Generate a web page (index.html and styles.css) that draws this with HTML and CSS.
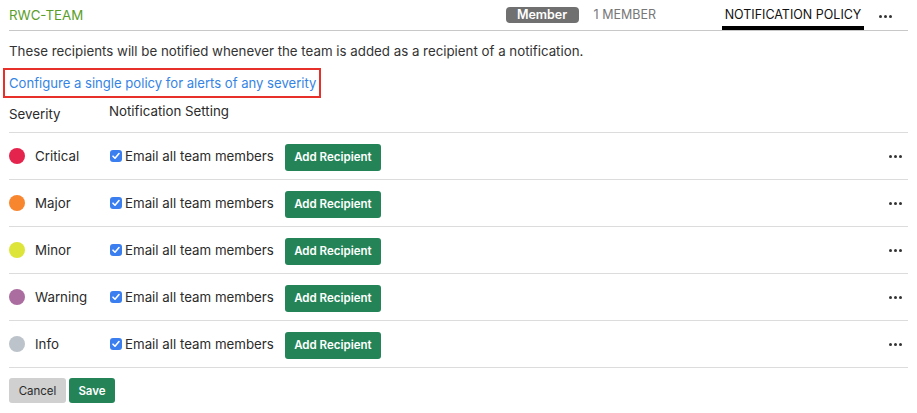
FILE: index.html
```html
<!DOCTYPE html>
<html>
<head>
<meta charset="utf-8">
<link rel="stylesheet" href="styles.css">
</head>
<body>
<div class="page">
  <div class="header">
    <div class="team">RWC-TEAM</div>
    <div class="header-right">
      <span class="badge">Member</span>
      <span class="members">1 MEMBER</span>
      <span class="tab">NOTIFICATION POLICY</span>
      <span class="more more-top"><i></i><i></i><i></i></span>
    </div>
  </div>
  <p class="desc">These recipients will be notified whenever the team is added as a recipient of a notification.</p>
  <div class="link-box"><a class="link">Configure a single policy for alerts of any severity</a></div>
  <div class="cols">
    <span class="col-sev">Severity</span>
    <span class="col-set">Notification Setting</span>
  </div>
  <div class="rows">
    <div class="row">
      <span class="dot critical"></span><span class="sev">Critical</span>
      <label class="check"><span class="box"><svg viewBox="0 0 12 12" width="12" height="12"><path d="M3 6.2l2 2 4-4.6" fill="none" stroke="#fff" stroke-width="1.6" stroke-linecap="round" stroke-linejoin="round"/></svg></span>Email all team members</label>
      <button class="btn green">Add Recipient</button>
      <span class="more"><i></i><i></i><i></i></span>
    </div>
    <div class="row">
      <span class="dot major"></span><span class="sev">Major</span>
      <label class="check"><span class="box"><svg viewBox="0 0 12 12" width="12" height="12"><path d="M3 6.2l2 2 4-4.6" fill="none" stroke="#fff" stroke-width="1.6" stroke-linecap="round" stroke-linejoin="round"/></svg></span>Email all team members</label>
      <button class="btn green">Add Recipient</button>
      <span class="more"><i></i><i></i><i></i></span>
    </div>
    <div class="row">
      <span class="dot minor"></span><span class="sev">Minor</span>
      <label class="check"><span class="box"><svg viewBox="0 0 12 12" width="12" height="12"><path d="M3 6.2l2 2 4-4.6" fill="none" stroke="#fff" stroke-width="1.6" stroke-linecap="round" stroke-linejoin="round"/></svg></span>Email all team members</label>
      <button class="btn green">Add Recipient</button>
      <span class="more"><i></i><i></i><i></i></span>
    </div>
    <div class="row">
      <span class="dot warning"></span><span class="sev">Warning</span>
      <label class="check"><span class="box"><svg viewBox="0 0 12 12" width="12" height="12"><path d="M3 6.2l2 2 4-4.6" fill="none" stroke="#fff" stroke-width="1.6" stroke-linecap="round" stroke-linejoin="round"/></svg></span>Email all team members</label>
      <button class="btn green">Add Recipient</button>
      <span class="more"><i></i><i></i><i></i></span>
    </div>
    <div class="row">
      <span class="dot info"></span><span class="sev">Info</span>
      <label class="check"><span class="box"><svg viewBox="0 0 12 12" width="12" height="12"><path d="M3 6.2l2 2 4-4.6" fill="none" stroke="#fff" stroke-width="1.6" stroke-linecap="round" stroke-linejoin="round"/></svg></span>Email all team members</label>
      <button class="btn green">Add Recipient</button>
      <span class="more"><i></i><i></i><i></i></span>
    </div>
  </div>
  <div class="actions">
    <button class="btn grey">Cancel</button>
    <button class="btn green save">Save</button>
  </div>
</div>
</body>
</html>
```
FILE: styles.css
```css
* { box-sizing: border-box; }
html, body { margin: 0; padding: 0; background: #fff; }
body {
  font-family: Inter, "Open Sans", "Liberation Sans", sans-serif;
  font-size: 13.3px;
  color: #2b2b2b;
  white-space: nowrap;
}
.page { padding: 0 9px; }
.header {
  height: 31px;
  display: flex;
  align-items: stretch;
  justify-content: space-between;
  border-bottom: 1px solid #c8c8c8;
}
.team {
  color: #5a9e2a;
  font-size: 13.3px;
  padding-top: 7px;
}
.header-right { display: flex; align-items: stretch; }
.badge {
  align-self: flex-start;
  margin-top: 7px;
  height: 16px;
  width: 73px;
  background: #707070;
  color: #fff;
  font-weight: 600;
  font-size: 12.5px;
  line-height: 16px;
  text-align: center;
  border-radius: 4px;
}
.members {
  margin-left: 15px;
  color: #777;
  font-size: 12.5px;
  padding-top: 7px;
}
.tab {
  margin-left: 66px;
  width: 142px;
  font-size: 12.5px;
  color: #111;
  padding-top: 7px;
  text-align: center;
  border-bottom: 4px solid #000;
}
.more {
  display: flex;
  gap: 2px;
  align-items: center;
  margin-left: 15px;
  width: 14px;
}
.more i {
  width: 3px; height: 3px; border-radius: 50%;
  background: #333;
  display: block;
}
.more-top { align-self: flex-start; margin-top: 15px; margin-right: 15px; }
.desc { margin: 10px 0 0; line-height: 20px; color: #333; }
.link-box {
  margin: 7px 0 0 -6px;
  width: 318px;
  height: 30px;
  border: 2px solid #e8302b;
  display: flex;
  align-items: center;
  padding-left: 4px;
}
.link { color: #3584e4; font-size: 13.1px; }
.cols {
  display: flex;
  height: 35px;
  align-items: flex-start;
  padding-top: 5px;
  border-bottom: 1px solid #dcdcdc;
}
.col-sev { width: 100px; padding-top: 3px; }
.row {
  height: 47px;
  display: flex;
  align-items: center;
  border-bottom: 1px solid #dcdcdc;
}
.dot { width: 16px; height: 16px; border-radius: 50%; margin-right: 10px; }
.critical { background: #e5244d; }
.major { background: #f7862f; }
.minor { background: #dde53a; }
.warning { background: #ab6da0; }
.info { background: #bcc3ca; }
.sev { width: 75px; }
.check { display: flex; align-items: center; color: #2b2b2b; }
.box {
  width: 12px; height: 12px; border-radius: 3px;
  background: #3b7ef0;
  display: inline-flex;
  margin-right: 3px;
}
.btn {
  font-family: inherit;
  border: none;
  border-radius: 3px;
  font-size: 11.5px;
  font-weight: 600;
  cursor: pointer;
}
.green { background: #248458; color: #fff; }
.row .btn { margin-left: 11px; width: 96px; height: 27px; padding: 0; margin-top: 2px; }
.row .more { margin-left: auto; margin-right: 5px; }
.actions { display: flex; gap: 3px; margin-top: 10px; }
.grey { background: #d0d0d0; color: #2b2b2b; font-weight: 400; width: 57px; height: 25px; }
.save { width: 46px; height: 25px; }
```
